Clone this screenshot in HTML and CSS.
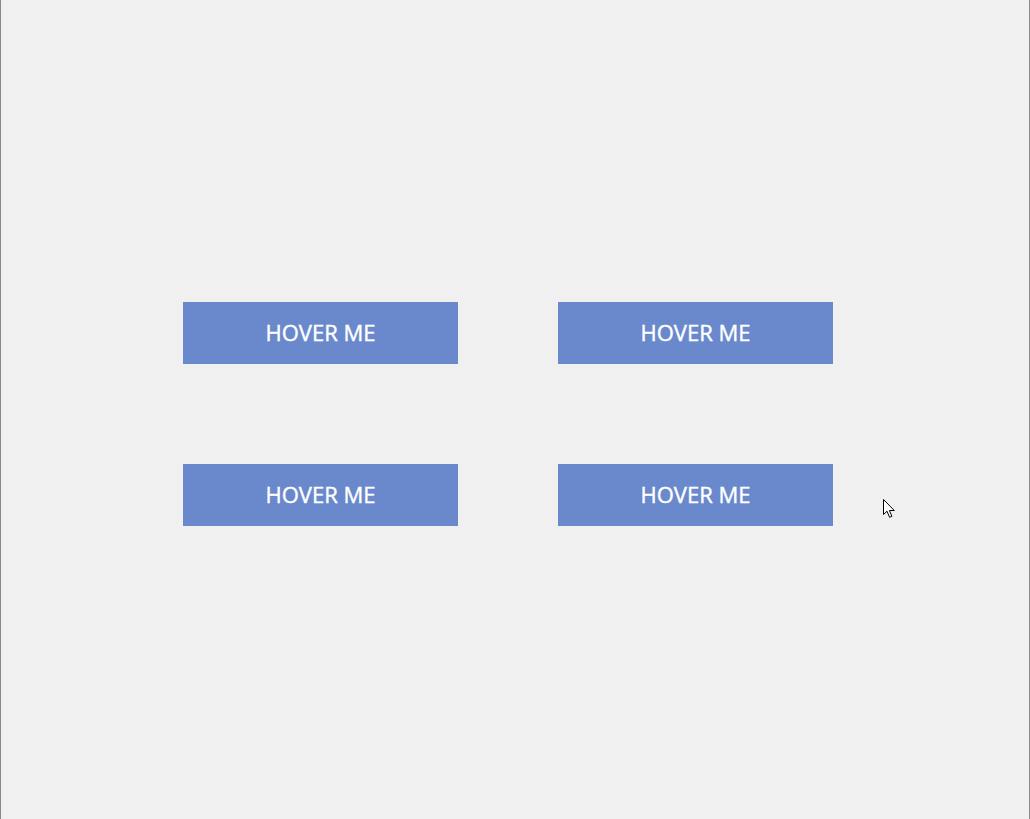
FILE: index.html
```html
<!DOCTYPE html>
<html>
<head>
<meta charset="utf-8">
<link rel="stylesheet" href="styles.css">
</head>
<body>
<div class="window">
  <div class="grid">
    <button class="btn">HOVER ME</button>
    <button class="btn">HOVER ME</button>
    <button class="btn">HOVER ME</button>
    <button class="btn">HOVER ME</button>
  </div>
  <svg class="cursor" width="13" height="20" viewBox="0 0 13 20">
    <path d="M0.5 0.5 L0.5 15.5 L4 12.2 L6.6 18.3 L8.9 17.3 L6.4 11.5 L11.3 11.5 Z" fill="#fff" stroke="#000" stroke-width="1" stroke-linejoin="miter"/>
  </svg>
</div>
</body>
</html>
```
FILE: styles.css
```css
html, body {
  margin: 0;
  padding: 0;
  height: 100%;
}
body {
  background: #f0f0f0;
}
.window {
  position: relative;
  box-sizing: border-box;
  height: 819px;
  border-left: 1px solid #8a8a8a;
  border-right: 1px solid #8a8a8a;
  padding: 302px 0 0 182px;
}
.grid {
  display: grid;
  grid-template-columns: 275px 275px;
  grid-auto-rows: 62px;
  column-gap: 100px;
  row-gap: 100px;
}
.btn {
  border: none;
  margin: 0;
  padding: 0 0 2px 0;
  background: #6a89cc;
  color: #ffffff;
  font-family: "Open Sans", "Noto Sans", sans-serif;
  font-size: 22px;
  font-weight: 400;
  -webkit-text-stroke: 0.4px #ffffff;
  cursor: default;
}
.cursor {
  position: absolute;
  left: 882px;
  top: 499px;
}
```
